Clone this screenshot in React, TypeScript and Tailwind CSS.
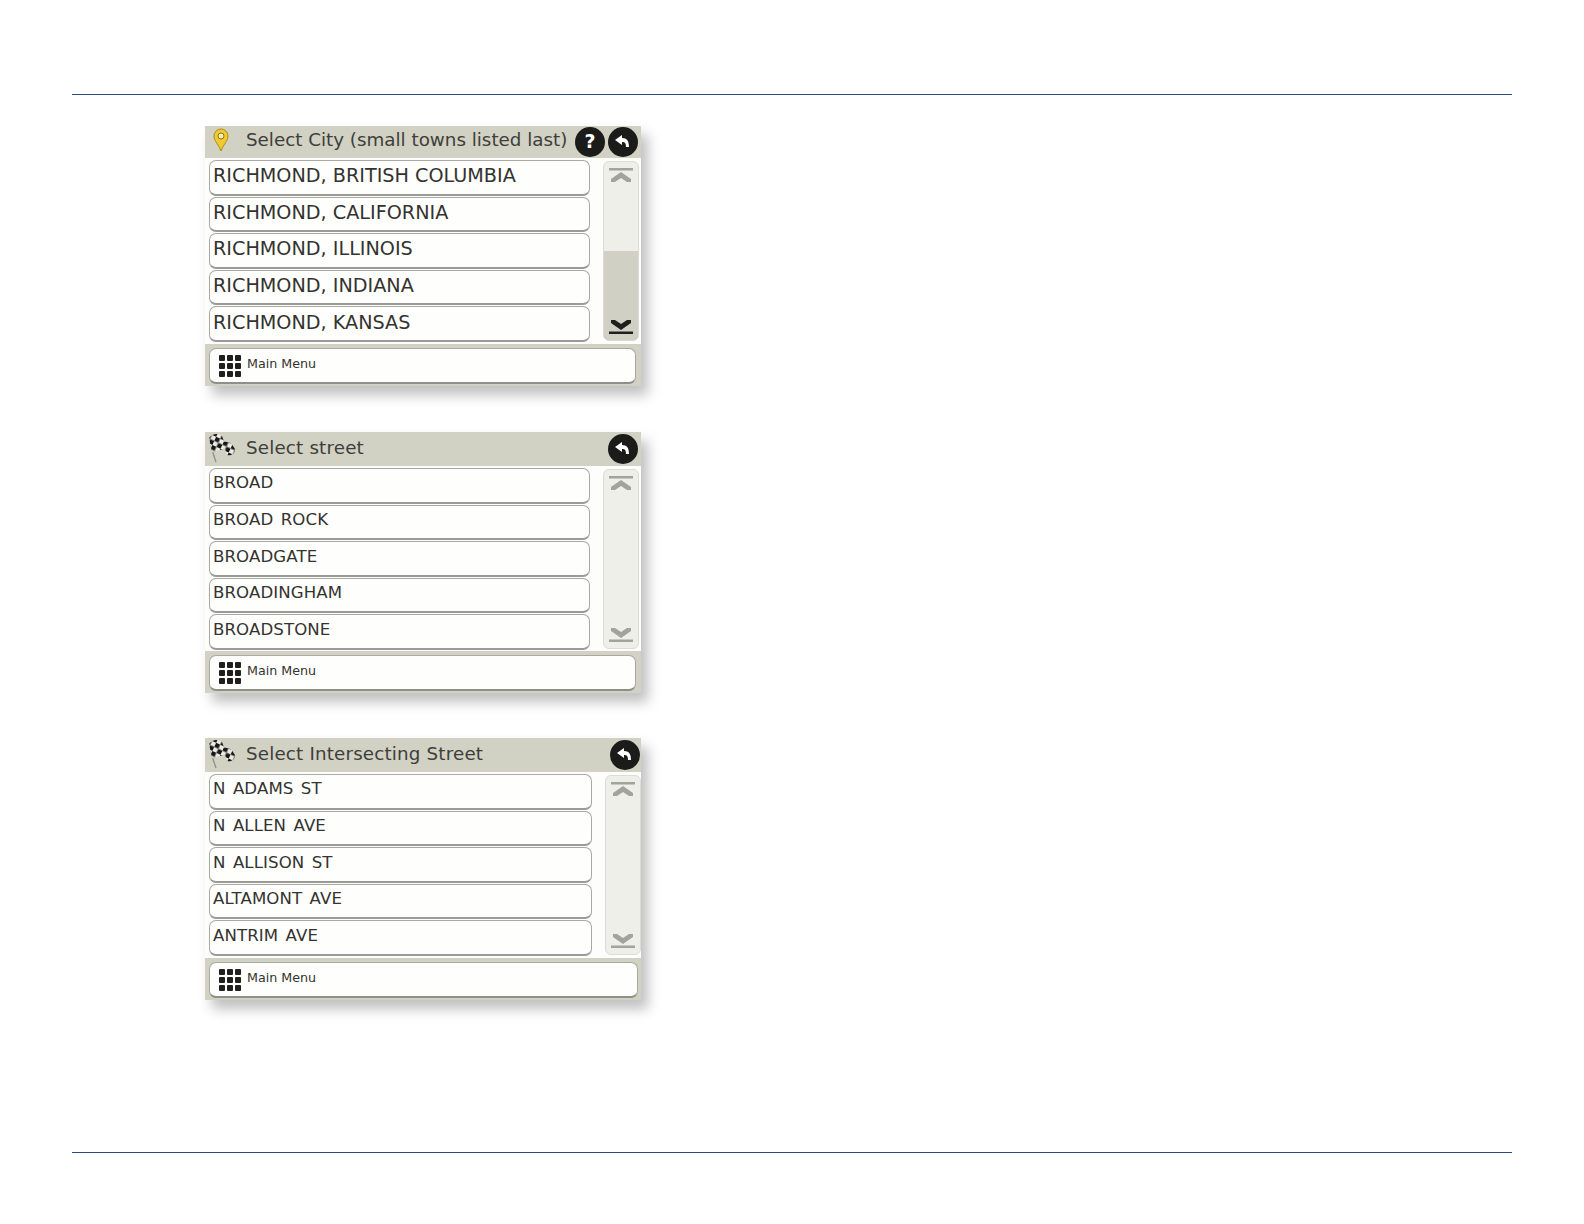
const DEJAVU = "font-['DejaVu_Sans',sans-serif]";

function Pin() {
  return (
    <svg width="16" height="24" viewBox="0 0 16 24" className="ml-[8px] -mt-[4px] shrink-0">
      <path d="M8 23 C6 17 1 13 1 8 A7 7 0 0 1 15 8 C15 13 10 17 8 23 Z" fill="#f2c92e" stroke="#a98d1c" strokeWidth="1" />
      <circle cx="8" cy="8" r="3" fill="#f7eeb8" stroke="#8a7318" strokeWidth="1" />
    </svg>
  );
}

function Flag({ id }: { id: string }) {
  return (
    <svg width="28" height="30" viewBox="0 0 28 30" className="ml-[3px] -mt-[3px] shrink-0">
      <defs>
        <pattern id={id} width="9" height="9" patternUnits="userSpaceOnUse" patternTransform="rotate(25)">
          <rect width="9" height="9" fill="#ecece6" />
          <rect width="4.5" height="4.5" fill="#171715" />
          <rect x="4.5" y="4.5" width="4.5" height="4.5" fill="#171715" />
        </pattern>
      </defs>
      <path d="M3 12 L5 20 L8 29" stroke="#8b8b84" strokeWidth="1.2" fill="none" />
      <path d="M1 5 C5 0 10 0 14 3 L18 14 C14 18 9 17 4 19 Z" fill={`url(#${id})`} />
      <path d="M15 9 C19 8 23 9 27 16 C27 21 23 23 19 22 L17 16 Z" fill={`url(#${id})`} />
    </svg>
  );
}

function BackButton() {
  return (
    <div className="w-[30px] h-[30px] rounded-full bg-[#1b1b19] flex items-center justify-center shrink-0">
      <svg width="18" height="16" viewBox="0 0 18 16">
        <path d="M1 6 L8 1 L8 4 C13 4 15 7 15 13 L12 13 C12 9 11 8 8 8 L8 11 Z" fill="#ffffff" />
      </svg>
    </div>
  );
}

function GridIcon() {
  return (
    <div className="grid grid-cols-3 gap-[2px] w-[22px] ml-[9px] mr-[6px] shrink-0">
      {[0, 1, 2, 3, 4, 5, 6, 7, 8].map((i) => (
        <div key={i} className="h-[6px] bg-[#1f1f1d] rounded-[1px]" />
      ))}
    </div>
  );
}

function ScrollArrow({ down, color }: { down?: boolean; color: string }) {
  return (
    <svg width="24" height="15" viewBox="0 0 24 15" className="block">
      {down ? (
        <g fill={color}>
          <path d="M12 11 L22 4 L22 1 L18 1 L12 5 L6 1 L2 1 L2 4 Z" />
          <rect x="0" y="12.5" width="24" height="2.5" />
        </g>
      ) : (
        <g fill={color}>
          <rect x="0" y="0" width="24" height="2.5" />
          <path d="M12 4 L22 11 L22 14 L18 14 L12 10 L6 14 L2 14 L2 11 Z" />
        </g>
      )}
    </svg>
  );
}

type PanelProps = {
  title: string;
  icon: React.ReactNode;
  rows: string[];
  help?: boolean;
  large?: boolean;
  wide?: boolean;
  className?: string;
  bodyHeight?: string;
};

function Panel({ title, icon, rows, help, large, wide, className, bodyHeight }: PanelProps) {
  return (
    <div className={`w-[436px] flex flex-col bg-[#fdfdfb] shadow-[7px_9px_12px_rgba(0,0,0,0.25)] ${DEJAVU} ${className ?? ""}`}>
      <div className={`bg-[#d1d1c4] flex items-center ${large ? "h-[32px]" : "h-[34px]"}`}>
        <div className="w-[41px] shrink-0 flex items-center">{icon}</div>
        <span
          className={`text-[18.3px] text-[#3e3e3a] whitespace-nowrap leading-none ${
            large ? "-mt-[3px]" : "-mt-[1px] tracking-[0.17px]"
          }`}
        >
          {title}
        </span>
        <div className={`ml-auto flex items-center gap-[3px] -mt-[1px] ${wide ? "pr-[1px]" : "pr-[3px]"}`}>
          {help && (
            <div className="w-[30px] h-[30px] rounded-full bg-[#1b1b19] flex items-center justify-center text-white font-bold text-[19px] leading-none">
              ?
            </div>
          )}
          <BackButton />
        </div>
      </div>
      <div className={`flex pl-[4px] pt-[2px] ${bodyHeight ?? "h-[186px]"} ${wide ? "pr-[0px]" : "pr-[2px]"}`}>
        <div className={`flex flex-col gap-[1.1px] ${wide ? "w-[383px]" : "w-[381px]"}`}>
          {rows.map((r) => (
            <div
              key={r}
              className={`h-[35.5px] bg-[#fefefc] border border-[#a9a9a3] border-b-2 border-b-[#9b9b95] rounded-[7px] pl-[3px] flex items-center text-[#33332f] whitespace-pre leading-none ${
                large ? "text-[19.2px] pb-[3px]" : "text-[16.6px] tracking-[0.1px] [word-spacing:2px] pb-[3px]"
              }`}
            >
              {r}
            </div>
          ))}
        </div>
        <div className="ml-[13px] w-[36px] h-[180px] mt-[1px] rounded-[6px] border border-[#dcdcd6] bg-[#efefea] flex flex-col overflow-hidden relative">
          {large && (
            <div className="absolute -left-px -right-px -bottom-px h-[90px] bg-[#d0d0c4] border-x border-b border-[#a0a098] rounded-b-[6px]" />
          )}
          <div className="relative flex flex-col items-center justify-between h-full pt-[6px] pb-[6px]">
            <ScrollArrow color="#a3a39d" />
            <ScrollArrow down color={large ? "#1f1f1d" : "#a3a39d"} />
          </div>
        </div>
      </div>
      <div className={`h-[42px] bg-[#d1d1c4] pl-[4px] pt-[4px] ${wide ? "pr-[3px]" : "pr-[5px]"}`}>
        <div className="h-[36px] bg-[#fefefc] border border-[#a9a9a3] border-b-2 border-b-[#8f8f89] rounded-[7px] flex items-center">
          <GridIcon />
          <span className="text-[12.7px] text-[#33332f] leading-none pb-[3px]">Main Menu</span>
        </div>
      </div>
    </div>
  );
}

export default function App() {
  return (
    <div className="w-[1584px] h-[1224px] bg-white px-[72px] pt-[94px] flex flex-col">
      <div className="h-px bg-[#2f4a78]" />
      <div className="pl-[133px] pt-[31px] flex flex-col">
        <Panel
          title="Select City (small towns listed last)"
          icon={<Pin />}
          help
          large
          className="mb-[46px]"
          rows={["RICHMOND, BRITISH COLUMBIA", "RICHMOND, CALIFORNIA", "RICHMOND, ILLINOIS", "RICHMOND, INDIANA", "RICHMOND, KANSAS"]}
        />
        <Panel
          title="Select street"
          icon={<Flag id="flag-street" />}
          className="mb-[45px]"
          bodyHeight="h-[185px]"
          rows={["BROAD", "BROAD ROCK", "BROADGATE", "BROADINGHAM", "BROADSTONE"]}
        />
        <Panel
          title="Select Intersecting Street"
          icon={<Flag id="flag-intersecting" />}
          wide
          rows={["N ADAMS ST", "N ALLEN AVE", "N ALLISON ST", "ALTAMONT AVE", "ANTRIM AVE"]}
        />
      </div>
      <div className="h-px bg-[#2f4a78] mt-[152px]" />
    </div>
  );
}
